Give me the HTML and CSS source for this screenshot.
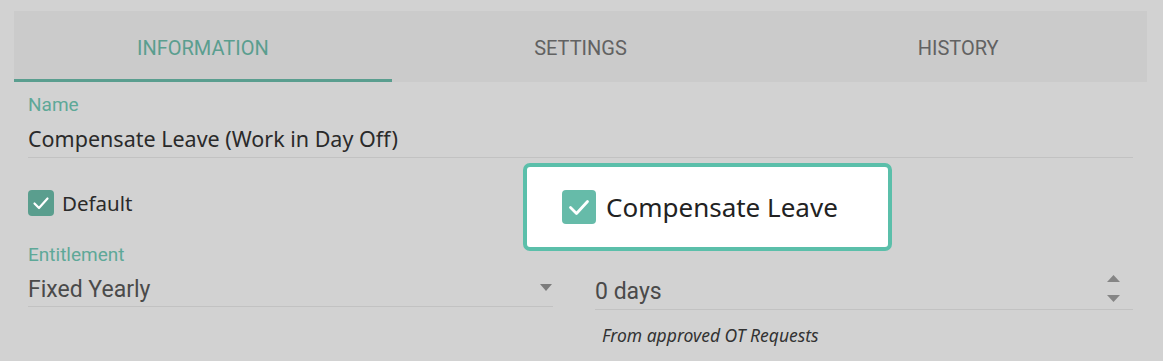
FILE: index.html
```html
<!DOCTYPE html>
<html>
<head>
  <meta charset="utf-8">
  <title>Leave Type</title>
  <link rel="stylesheet" href="styles.css">
</head>
<body>
  <!-- TABS -->
  <div class="tabs">
    <div class="tab active">INFORMATION</div>
    <div class="tab">SETTINGS</div>
    <div class="tab">HISTORY</div>
  </div>

  <div class="form">
    <!-- Name -->
    <div class="field name">
      <div class="label">Name</div>
      <div class="value">Compensate Leave (Work in Day Off)</div>
    </div>

    <!-- Checkboxes -->
    <div class="row checks">
      <label class="check">
        <svg class="box" width="26" height="26" viewBox="0 0 26 26">
          <rect width="26" height="26" rx="4" fill="#5a9e8e"/>
          <path d="M6.5 13.5 L11 18 L19.5 8.5" fill="none" stroke="#fff" stroke-width="2.2" stroke-linecap="round" stroke-linejoin="round"/>
        </svg>
        <span>Default</span>
      </label>

      <!-- tour spotlight -->
      <div class="spotlight">
        <svg class="box" width="34" height="34" viewBox="0 0 34 34">
          <rect width="34" height="34" rx="4" fill="#66bba9"/>
          <path d="M8.5 17.5 L14.5 23.5 L25.5 11.5" fill="none" stroke="#fff" stroke-width="2.8" stroke-linecap="round" stroke-linejoin="round"/>
        </svg>
        <span>Compensate Leave</span>
      </div>
    </div>

    <!-- Entitlement -->
    <div class="row entitlement">
      <div class="field">
        <div class="label">Entitlement</div>
        <div class="value select">
          <span>Fixed Yearly</span>
          <svg width="12" height="7" viewBox="0 0 12 7"><path d="M0 0 H12 L6 7 Z" fill="#7c7c7c"/></svg>
        </div>
      </div>
      <div class="field days">
        <div class="value number">
          <span>0 days</span>
          <span class="spin">
            <svg width="13" height="7" viewBox="0 0 13 7"><path d="M0 7 H13 L6.5 0 Z" fill="#858585"/></svg>
            <svg width="13" height="7" viewBox="0 0 13 7"><path d="M0 0 H13 L6.5 7 Z" fill="#858585"/></svg>
          </span>
        </div>
        <div class="hint">From approved OT Requests</div>
      </div>
    </div>
  </div>
</body>
</html>
```

FILE: styles.css
```css
body {
  margin: 0;
  background: #d2d2d2;
  font-family: "Noto Sans", sans-serif;
  color: #2a2a2a;
}
.tabs {
  display: grid;
  grid-template-columns: 1fr 1fr 1fr;
  margin: 11px 16px 0 14px;
  height: 71px;
  background: #cbcbcb;
}
.tab {
  text-align: center;
  font-family: Roboto, sans-serif;
  font-size: 20px;
  line-height: 20px;
  color: #626262;
  padding-top: 27px;
  box-sizing: border-box;
}
.tab.active {
  color: #5a9e8f;
  border-bottom: 3px solid #5a9e8f;
}
.form {
  padding: 0 30px 0 28px;
}
.label {
  font-family: Roboto, sans-serif;
  font-size: 19px;
  line-height: 22px;
  color: #5ea898;
}
.name .label {
  margin-top: 12px;
}
.value {
  font-size: 21.5px;
  line-height: 30px;
  padding: 8px 0 3px;
  border-bottom: 1px solid #c2c2c2;
}
.row {
  display: grid;
  grid-template-columns: 525px 1fr;
  column-gap: 42px;
}
.checks {
  position: relative;
  height: 86px;
  align-items: center;
}
.check {
  display: flex;
  align-items: center;
  gap: 8px;
  font-size: 20.5px;
  padding-top: 4px;
}
.box {
  display: block;
}
.spotlight {
  position: absolute;
  left: 495px;
  top: 5px;
  width: 369px;
  height: 88px;
  background: #fff;
  border: 4px solid #5bbfaa;
  border-radius: 7px;
  display: flex;
  align-items: center;
  gap: 10px;
  padding-left: 35px;
  box-sizing: border-box;
  font-size: 26px;
  color: #222;
}
.select,
.number {
  display: flex;
  align-items: center;
  justify-content: space-between;
  color: #4a4a4a;
  font-family: Roboto, sans-serif;
  font-size: 23px;
  padding: 9px 0 1px;
}
.select svg {
  margin: 0 1px 6px 0;
}
.days {
  padding-top: 22px;
}
.spin {
  display: flex;
  flex-direction: column;
  gap: 13px;
  margin: 0 13px 6px 0;
}
.spin svg {
  display: block;
}
.hint {
  font-style: italic;
  font-size: 17.5px;
  line-height: 22px;
  color: #333;
  padding: 14px 0 0 7px;
}
```
